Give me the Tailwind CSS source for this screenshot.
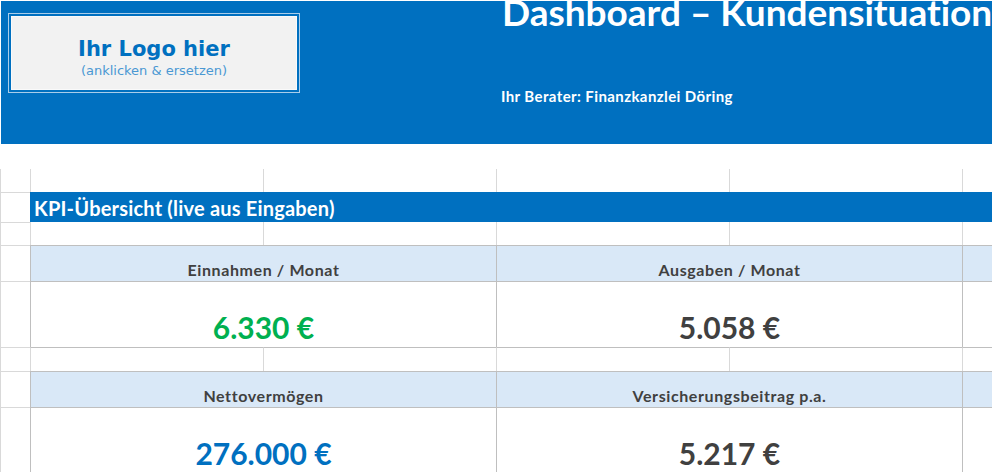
<!DOCTYPE html>
<html lang="de">
<head>
  <meta charset="UTF-8" />
  <title>Dashboard – Kundensituation</title>
  <script src="https://cdn.jsdelivr.net/npm/@tailwindcss/browser@4"></script>
</head>
<body class="w-[992px] h-[472px] overflow-hidden bg-white font-['Lato','Liberation_Sans',sans-serif] [font-variant-ligatures:none]">

  <!-- header band -->
  <header class="ml-px mt-px h-[143px] bg-[#0070c0] flex overflow-hidden">
    <div class="w-[292px] h-[80px] ml-[7px] mt-[12px] border border-[#a9cdea] p-[2px] shrink-0">
      <div class="h-full bg-[#f2f2f2] border border-[#fafafa] flex flex-col items-center justify-center font-['DejaVu_Sans',sans-serif]">
        <div class="text-[21px] leading-[25px] font-bold text-[#0070c0] mt-[9px]">Ihr Logo hier</div>
        <div class="text-[13px] leading-[17px] text-[#4a98d3]">(anklicken &amp; ersetzen)</div>
      </div>
    </div>
    <div class="ml-[202px] shrink-0 text-white font-bold whitespace-nowrap">
      <h1 class="text-[37px] leading-[26px] -mt-[2px]">Dashboard – Kundensituation</h1>
      <p class="text-[15px] leading-[18px] tracking-[0.4px] mt-[62px] -ml-[1px]">Ihr Berater: Finanzkanzlei Döring</p>
    </div>
  </header>

  <!-- sheet -->
  <main class="mt-[25px] grid grid-cols-[30px_233px_233px_233px_233px_30px] grid-rows-[23px_30px_23px_36px_66px_24px_36px_66px] text-[#404040] font-bold">
    <!-- row above banner -->
    <div class="border-l border-[#d9d9d9]"></div>
    <div class="border-l border-[#d9d9d9]"></div>
    <div class="border-l border-[#d9d9d9]"></div>
    <div class="border-l border-[#d9d9d9]"></div>
    <div class="border-l border-[#d9d9d9]"></div>
    <div class="border-l border-[#d9d9d9]"></div>

    <!-- banner -->
    <div class="border-l border-t border-[#d9d9d9]"></div>
    <div class="col-span-5 bg-[#0070c0] text-white text-[20px] leading-[30px] tracking-[0.2px] pl-[4px] pt-px">KPI-Übersicht (live aus Eingaben)</div>

    <!-- spacer -->
    <div class="border-l border-t border-[#d9d9d9]"></div>
    <div class="border-l border-[#d9d9d9]"></div>
    <div class="border-l border-[#d9d9d9]"></div>
    <div class="border-l border-[#d9d9d9]"></div>
    <div class="border-l border-[#d9d9d9]"></div>
    <div class="border-l border-[#d9d9d9]"></div>

    <!-- first KPI row -->
    <div class="border-l border-t border-[#d9d9d9]"></div>
    <div class="col-span-2 bg-[#d9e8f7] border-l border-t border-[#bfbfbf] text-center text-[16px] leading-[18px] tracking-[0.6px] pt-[15px]">Einnahmen / Monat</div>
    <div class="col-span-2 bg-[#d9e8f7] border-l border-t border-[#bfbfbf] text-center text-[16px] leading-[18px] tracking-[0.6px] pt-[15px]">Ausgaben / Monat</div>
    <div class="bg-[#d9e8f7] border-l border-t border-[#bfbfbf]"></div>

    <div class="border-l border-t border-[#d9d9d9]"></div>
    <div class="col-span-2 border-l border-t border-[#bfbfbf] text-center text-[30px] leading-[36px] pt-[27px] text-[#00b050]">6.330 €</div>
    <div class="col-span-2 border-l border-t border-[#bfbfbf] text-center text-[30px] leading-[36px] pt-[27px]">5.058 €</div>
    <div class="border-l border-t border-[#bfbfbf]"></div>

    <!-- spacer -->
    <div class="border-l border-t border-[#d9d9d9]"></div>
    <div class="border-l border-t border-[#d9d9d9] border-t-[#bfbfbf]"></div>
    <div class="border-l border-t border-[#d9d9d9] border-t-[#bfbfbf]"></div>
    <div class="border-l border-t border-[#d9d9d9] border-t-[#bfbfbf]"></div>
    <div class="border-l border-t border-[#d9d9d9] border-t-[#bfbfbf]"></div>
    <div class="border-l border-t border-[#d9d9d9] border-t-[#bfbfbf]"></div>

    <!-- second KPI row -->
    <div class="border-l border-t border-[#d9d9d9]"></div>
    <div class="col-span-2 bg-[#d9e8f7] border-l border-t border-[#bfbfbf] text-center text-[16px] leading-[18px] tracking-[0.6px] pt-[15px]">Nettovermögen</div>
    <div class="col-span-2 bg-[#d9e8f7] border-l border-t border-[#bfbfbf] text-center text-[16px] leading-[18px] tracking-[0.6px] pt-[15px]">Versicherungsbeitrag p.a.</div>
    <div class="bg-[#d9e8f7] border-l border-t border-[#bfbfbf]"></div>

    <div class="border-l border-t border-[#d9d9d9]"></div>
    <div class="col-span-2 border-l border-t border-[#bfbfbf] text-center text-[30px] leading-[36px] pt-[27px] text-[#0070c0]">276.000 €</div>
    <div class="col-span-2 border-l border-t border-[#bfbfbf] text-center text-[30px] leading-[36px] pt-[27px]">5.217 €</div>
    <div class="border-l border-t border-[#bfbfbf]"></div>
  </main>
</body>
</html>
